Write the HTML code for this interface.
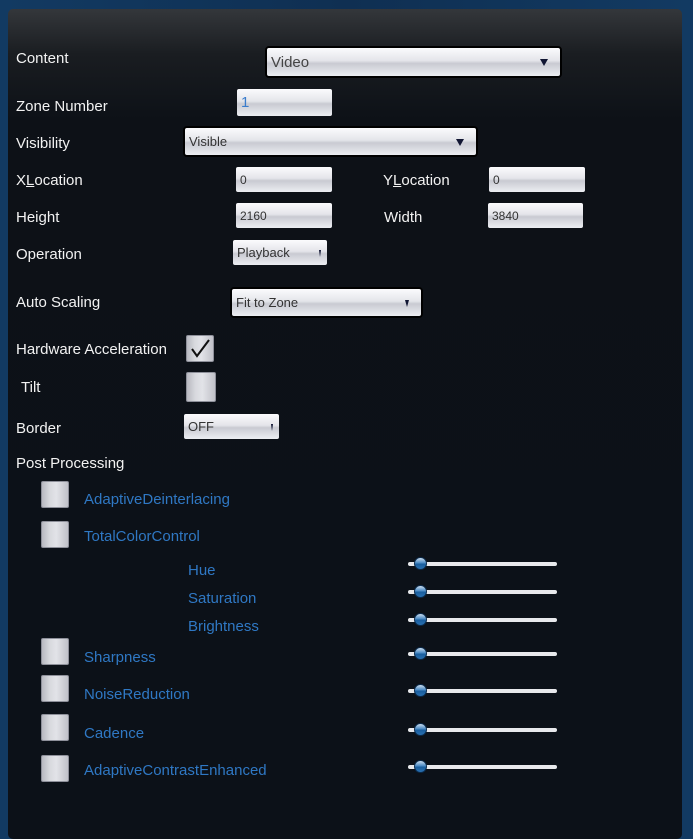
<!DOCTYPE html>
<html><head><style>
body{margin:0;width:693px;height:818px;overflow:hidden;background:linear-gradient(90deg,#123a62 0,#0f2f52 50%,#123a62 100%);font-family:"Liberation Sans",sans-serif;position:relative}
#p{position:absolute;left:8px;top:9px;width:674px;height:830px;border-radius:5px;background:linear-gradient(180deg,#34373b 0,#1a1d21 45px,#0d1117 110px,#0c1118 100%)}
.l{position:absolute;color:#f2f2f2;font-size:15px;line-height:18px;white-space:nowrap;margin-top:1px}
.b{position:absolute;color:#2f78c4;font-size:15px;line-height:18px;white-space:nowrap;margin-top:1px}
.c{position:absolute;box-sizing:border-box;background:linear-gradient(180deg,#fbfbfd 0,#e4e5ea 45%,#c9cad2 55%,#eceef2 100%);border-radius:2px;color:#333;font-size:13px;padding-left:4px;display:flex;align-items:center}
.d{border:2px solid #000;border-radius:4px}
.a{position:absolute;right:12px;top:50%;margin-top:-3px;width:0;height:0;border-left:4px solid transparent;border-right:4px solid transparent;border-top:7px solid #111633}
.a.s{border-left-width:1.5px;border-right-width:1.5px;right:6px}
.k{position:absolute;box-sizing:border-box;width:28px;height:27px;border-radius:2px;background:linear-gradient(90deg,#b8b9c0 0,#d8d9de 30%,#e2e3e8 55%,#c0c1c8 100%);border:1px solid #8e909a}
.t{position:absolute;left:408px;width:149px;height:4px;background:#e8e9ec;border-radius:2px}
.t i{position:absolute;left:6px;top:-5px;width:13px;height:13px;border-radius:50%;background:linear-gradient(180deg,#cde 0,#4a8ac4 45%,#1b5f9e 55%,#2a70b0 100%);border:1px solid #0b2a4a;box-sizing:border-box}
</style></head><body>
<div id="p"></div>
<div class="l" style="left:16px;top:49px">Content</div>
<div class="c d" style="left:265px;top:46px;width:297px;height:32px;font-size:15px;color:#444">Video<span class="a"></span></div>
<div class="l" style="left:16px;top:97px">Zone Number</div>
<div class="c" style="left:237px;top:89px;width:95px;height:27px;color:#3a7ccc;font-size:15px">1</div>
<div class="l" style="left:16px;top:134px">Visibility</div>
<div class="c d" style="left:183px;top:126px;width:295px;height:31px">Visible<span class="a"></span></div>
<div class="l" style="left:16px;top:171px">X<u>L</u>ocation</div>
<div class="c" style="left:236px;top:167px;width:96px;height:25px;font-size:12px">0</div>
<div class="l" style="left:383px;top:171px">Y<u>L</u>ocation</div>
<div class="c" style="left:489px;top:167px;width:96px;height:25px;font-size:12px">0</div>
<div class="l" style="left:16px;top:208px">Height</div>
<div class="c" style="left:236px;top:203px;width:96px;height:25px;font-size:12px">2160</div>
<div class="l" style="left:384px;top:208px">Width</div>
<div class="c" style="left:488px;top:203px;width:95px;height:25px;font-size:12px">3840</div>
<div class="l" style="left:16px;top:245px">Operation</div>
<div class="c" style="left:233px;top:240px;width:94px;height:25px">Playback<span class="a s"></span></div>
<div class="l" style="left:16px;top:293px">Auto Scaling</div>
<div class="c d" style="left:230px;top:287px;width:193px;height:31px">Fit to Zone<span class="a" style="border-left-width:2.5px;border-right-width:2.5px"></span></div>
<div class="l" style="left:16px;top:340px">Hardware Acceleration</div>
<div class="k" style="left:186px;top:335px"><svg width="26" height="25" viewBox="0 0 26 25"><path d="M5 13 L10 20 L22 4" fill="none" stroke="#111" stroke-width="2"/></svg></div>
<div class="l" style="left:21px;top:378px">Tilt</div>
<div class="k" style="left:186px;top:372px;width:30px;height:30px"></div>
<div class="l" style="left:16px;top:419px">Border</div>
<div class="c" style="left:184px;top:414px;width:95px;height:25px">OFF<span class="a s"></span></div>
<div class="l" style="left:16px;top:454px">Post Processing</div>
<div class="k" style="left:41px;top:481px"></div><div class="b" style="left:84px;top:490px">AdaptiveDeinterlacing</div>
<div class="k" style="left:41px;top:521px"></div><div class="b" style="left:84px;top:527px">TotalColorControl</div>
<div class="b" style="left:188px;top:561px">Hue</div>
<div class="b" style="left:188px;top:589px">Saturation</div>
<div class="b" style="left:188px;top:617px">Brightness</div>
<div class="k" style="left:41px;top:638px"></div><div class="b" style="left:84px;top:648px">Sharpness</div>
<div class="k" style="left:41px;top:675px"></div><div class="b" style="left:84px;top:685px">NoiseReduction</div>
<div class="k" style="left:41px;top:714px"></div><div class="b" style="left:84px;top:724px">Cadence</div>
<div class="k" style="left:41px;top:755px"></div><div class="b" style="left:84px;top:761px">AdaptiveContrastEnhanced</div>
<div class="t" style="top:562px"><i></i></div>
<div class="t" style="top:590px"><i></i></div>
<div class="t" style="top:618px"><i></i></div>
<div class="t" style="top:652px"><i></i></div>
<div class="t" style="top:689px"><i></i></div>
<div class="t" style="top:728px"><i></i></div>
<div class="t" style="top:765px"><i></i></div>
</body></html>
